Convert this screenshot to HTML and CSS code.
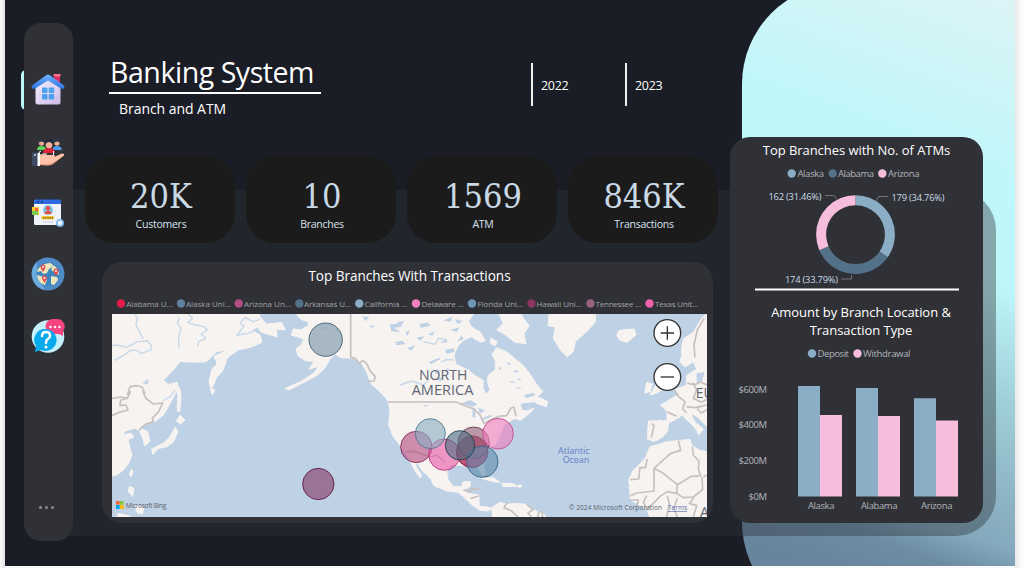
FILE: index.html
```html
<!DOCTYPE html>
<html lang="en">
<head>
<meta charset="utf-8">
<title>Banking System</title>
<link rel="stylesheet" href="styles.css">
</head>
<body>
<div class="dashboard">
  <div class="accent"></div>
  <div class="layer"></div>

  <nav class="sidebar">
    <span class="active-mark"></span>
    <svg class="icon" viewBox="0 0 34 34">
      <defs>
        <linearGradient id="roof" x1="0" y1="0" x2="0" y2="1"><stop offset="0" stop-color="#72b5ff"/><stop offset="1" stop-color="#2c72df"/></linearGradient>
        <linearGradient id="wall" x1="0" y1="0" x2="1" y2="1"><stop offset="0" stop-color="#f3f1ff"/><stop offset="1" stop-color="#cdb9e6"/></linearGradient>
      </defs>
      <path fill="#d92f62" d="M23 2h6v10l-6-4z"/><path fill="#ff6f8c" d="M22.500 1h7v2.500h-7z"/>
      <path fill="url(#wall)" d="M4.500 14 17 5l12.500 9v15.500a2 2 0 0 1-2 2h-21a2 2 0 0 1-2-2z"/>
      <path fill="url(#roof)" d="M15.500 2q1.500-1 3 0L33 12.500q1 1 0 2.500-1 1.500-3 .5L17 7.500 4 15.500q-2 1-3-.5-1-1.500 0-2.500z"/>
      <g fill="#4ba2ee"><rect x="11" y="14.500" width="5.500" height="5.500" rx="1"/><rect x="17.700" y="14.500" width="5.500" height="5.500" rx="1"/><rect x="11" y="21" width="5.500" height="5.500" rx="1"/><rect x="17.700" y="21" width="5.500" height="5.500" rx="1"/></g>
    </svg>
    <svg class="icon" viewBox="0 0 34 34">
      <path fill="#5bd65b" d="M6 15q0-4 4.500-4t4.500 4z"/><circle cx="10.500" cy="8" r="2.700" fill="#efac91"/><path fill="#29364a" d="M7.500 8q0-4 3-4t3 4q-3-3-6 0z"/>
      <path fill="#4a9cf0" d="M21.500 15q0-4 4.500-4t4.800 4z"/><circle cx="26" cy="8" r="2.700" fill="#efac91"/><path fill="#29364a" d="M23 8q0-4 3-4t3 4q-3-3-6 0z"/>
      <path fill="#e02436" d="M12 18q0-5 6-5t6 5z"/><circle cx="18" cy="9.800" r="3.500" fill="#f2b49a"/><path fill="#22293a" d="M13.800 10q-.3-5.500 4.200-5.500T22 10q-1.500-3-4-3t-4.200 3z"/>
      <path fill="none" stroke="#fff" stroke-width="1" stroke-dasharray="4 2" d="M8 19q0-3 2-3M12 19h5M22.500 16v4"/>
      <path fill="#ffc1a7" d="M8 20q4-2 8 0h7q2 1 0 2l8-3.500q3 0 2 2L22 29q-3 2-6 1H8z"/><path fill="#ed997f" d="m8 29 8 .5 5-1.500 10-6-9.500 7q-3 1.500-6 1.500L8 30z"/>
      <path fill="#fff" d="M6 18h3v13H6z"/><path fill="#3c4b63" d="M1 17.500h5.500V31H1z"/><circle cx="4" cy="20" r="1" fill="#dce3ef"/>
    </svg>
    <svg class="icon" viewBox="0 0 34 34">
      <rect x="3" y="3" width="27" height="25" rx="1.500" fill="#f0f3fa"/><path fill="#2f69df" d="M3 4q0-1.500 1.500-1.500h24Q30 2.500 30 4v3H3z"/><path stroke="#172d70" stroke-width="1.200" d="M8 .5v2M20 .5v2M24 .5v2M6 4.800h2M10 4.800h2"/>
      <circle cx="17" cy="13" r="5" fill="#7acced"/><circle cx="17" cy="11.300" r="2.300" fill="#ed4b49"/><path fill="#ed4b49" d="M13.500 17q0-3.200 3.500-3.200t3.500 3.200z"/>
      <rect x="10.500" y="19" width="12.500" height="3.600" rx="1" fill="#ffc730"/><path stroke="#5c502d" stroke-width="1.200" stroke-dasharray="1.300 .9" d="M12 20.800h10"/>
      <path stroke="#cbd2df" d="M12 25h10"/><path fill="#fec831" d="M1 10h7v8H1z"/><path fill="#77cf4b" d="M1 14h6v4H1z"/><path fill="#fa643f" d="M4 11h3v3H4z"/>
      <circle cx="29" cy="26" r="4" fill="#79b7ed"/><circle cx="29" cy="26" r="2.400" fill="#e7f6ff"/>
    </svg>
    <svg class="icon" viewBox="0 0 34 34">
      <circle cx="17" cy="17" r="16.500" fill="#4f8bc7"/><path fill="#6baadd" d="M6 5a16.500 16.500 0 0 0 8 28q-9-13-8-28z"/><circle cx="17" cy="17" r="11.500" fill="#3a84c0"/>
      <path fill="#ece7ba" d="M7 12q5-6 12-6 4 1 2 4l-3 2-2 4-4 1-2-3-4 1zM22 8q6 3 6 10l-3-2-5-3zM6 18l7 2 3 3-2 5q-7-2-8-10zM20 19l6 1 1 3-4 5-3-1z"/>
      <g fill="#e84e4b"><path d="M12 15q-2.500-3.500-2.500-5a2.500 2.500 0 0 1 5 0q0 1.500-2.500 5zM25 19q-2.500-3.500-2.500-5a2.500 2.500 0 0 1 5 0q0 1.500-2.500 5zM13.500 26Q11 22.500 11 21a2.500 2.500 0 0 1 5 0q0 1.500-2.500 5z"/></g>
      <g fill="#fff"><circle cx="12" cy="10" r="1"/><circle cx="25" cy="14" r="1"/><circle cx="13.500" cy="21" r="1"/></g>
    </svg>
    <svg class="icon" viewBox="0 0 34 34">
      <circle cx="17" cy="17.500" r="16.300" fill="#c4f0fb"/>
      <path fill="#f84582" d="M22 0h4a7.700 7.700 0 0 1 6 12.500V17l-4-2h-6A7.500 7.500 0 0 1 22 0z"/><g fill="#fff"><circle cx="19.500" cy="8" r="1.200"/><circle cx="24" cy="8" r="1.200"/><circle cx="28.500" cy="8" r="1.200"/></g>
      <path fill="#09a9ec" d="M15 10a11 11 0 1 1-5 21l-6 2 1-6A11 11 0 0 1 15 10z"/>
      <path fill="none" stroke="#fff" stroke-width="2.500" stroke-linecap="round" d="M11 17q0-4 4-4t4 4q0 2-2.500 3.300Q15 21.200 15 24"/><circle cx="15" cy="28" r="1.500" fill="#fff"/>
    </svg>
    <span class="more"><i></i><i></i><i></i></span>
  </nav>

  <main class="main">
    <header class="header">
      <div class="heading">
        <h1 class="title">Banking System</h1>
        <p class="subtitle">Branch and ATM</p>
      </div>
      <div class="years"><span class="year">2022</span><span class="year">2023</span></div>
    </header>

    <section class="stats">
      <div class="stat"><b>20K</b><span>Customers</span></div>
      <div class="stat"><b>10</b><span>Branches</span></div>
      <div class="stat"><b>1569</b><span>ATM</span></div>
      <div class="stat"><b>846K</b><span>Transactions</span></div>
    </section>

    <section class="map-card">
      <h2 class="card-title map-title">Top Branches With Transactions</h2>
      <svg class="map-legend" viewBox="112 297 595 14">
        <g>
          <circle cx="121" cy="303.500" r="4.200" fill="#e31b48"/><circle cx="181" cy="303.500" r="4.200" fill="#5e819d"/><circle cx="238.700" cy="303.500" r="4.200" fill="#b34e83"/><circle cx="299.300" cy="303.500" r="4.200" fill="#53728a"/><circle cx="359.300" cy="303.500" r="4.200" fill="#8badc5"/><circle cx="416" cy="303.500" r="4.200" fill="#f282bb"/><circle cx="472" cy="303.500" r="4.200" fill="#6e97b6"/><circle cx="531.500" cy="303.500" r="4.200" fill="#8b355f"/><circle cx="590.500" cy="303.500" r="4.200" fill="#98637f"/><circle cx="649.500" cy="303.500" r="4.200" fill="#ef62a9"/>
        </g>
        <g class="legend-text">
          <text x="126.300" y="307" textLength="46.500">Alabama U...</text><text x="186" y="307" textLength="45">Alaska Uni...</text><text x="244" y="307" textLength="47">Arizona Un...</text><text x="304" y="307" textLength="47">Arkansas U...</text><text x="364.500" y="307" textLength="43">California ...</text><text x="421.500" y="307" textLength="42">Delaware ...</text><text x="477.500" y="307" textLength="45.500">Florida Uni...</text><text x="536.500" y="307" textLength="45.500">Hawaii Uni...</text><text x="595.500" y="307" textLength="45.500">Tennessee ...</text><text x="655" y="307" textLength="43">Texas Unit...</text>
        </g>
      </svg>
      <svg class="map" viewBox="36 177 1785 609">
        <defs>
          <filter id="coast" x="-5%" y="-5%" width="110%" height="110%"><feTurbulence type="fractalNoise" baseFrequency=".14" numOctaves="3" seed="4"/><feDisplacementMap in="SourceGraphic" scale="5" xChannelSelector="R" yChannelSelector="G"/></filter>
        </defs>
        <rect x="36" y="177" width="1785" height="609" fill="#bed1e5"/>
        <g filter="url(#coast)">
          <g class="land">
            <!-- Asia, Japan and the western Pacific islands -->
            <path d="M0 140H465L480 185 500 208 545 202 556 225 528 222 532 246 512 240 485 232 470 217 455 226 480 240 486 262 455 276 415 285 392 300 380 312 375 330 366 350 350 366 343 385 333 405 327 380 335 345 350 328 348 315 342 304 386 284 350 290 335 305 318 320 290 322 240 320 215 350 190 376 205 388 232 382 235 402 225 418 205 455 190 480 165 500 150 502 132 510 124 520 143 530 150 558 134 573 130 555 118 527 104 520 76 528 70 540 92 534 102 545 84 556 90 580 96 600 86 625 70 645 50 660 0 672z"/>
            <path d="M232 392 240 402 243 430 239 470 232 468 234 430zM240 480 255 495 241 507 229 498zM226 516 233 530 221 560 201 575 177 580 163 590 159 580 190 565 206 550 216 534zM155 580 165 593 158 598zM95 643 99 650 93 665 88 656zM88 694 102 700 98 724 85 710zM108 750 130 758 128 777 109 770zM55 775 90 783 88 800H45zM330 402 345 404 337 418z"/>
            <!-- North America, from Alaska down to Panama -->
            <path d="M560 140 590 178 602 193 624 200 626 210 604 225 580 222 574 240 612 252 605 268 588 282 594 302 616 317 642 319 628 342 657 334 642 354 602 380 556 400 566 405 620 378 652 360 674 340 690 312 706 298 722 308 760 310 784 325 800 350 812 385 824 396 845 415 865 440 870 470 866 510 880 546 903 575 920 600 932 622 947 650 960 668 965 662 950 638 945 626 952 625 970 650 994 674 1000 690 1040 708 1075 712 1095 730 1116 750 1140 766 1164 768 1176 760 1161 756 1138 754 1136 720 1106 715 1091 704 1110 695 1112 680 1090 680 1084 695 1060 694 1044 674 1040 648 1052 630 1080 630 1105 636 1126 630 1140 646 1148 664 1156 658 1150 622 1160 594 1186 568 1202 534 1212 510 1244 490 1262 496 1294 470 1302 460 1280 468 1266 465 1260 445 1302 440 1320 446 1308 428 1328 410 1308 385 1285 350 1268 330 1242 309 1220 290 1190 278 1176 298 1186 318 1186 345 1165 360 1162 380 1170 405 1158 418 1149 400 1150 376 1122 360 1105 345 1068 328 1062 300 1074 272 1090 256 1116 245 1136 232 1115 215 1105 200 1145 140z"/>
            <path d="M1180 140H1245L1270 190 1288 212 1272 235 1278 266 1245 262 1214 238 1190 225 1210 205zM1172 250 1192 260 1186 272 1172 266zM1310 425 1324 430 1343 440 1340 455 1310 445zM1110 218 1140 230 1156 256 1144 262 1120 250z"/>
            <!-- Greenland, Iceland and the Caribbean -->
            <path d="M1350 140 1344 212 1366 216 1360 250 1382 286 1402 306 1420 290 1426 260 1460 230 1485 202 1490 140zM1550 242 1557 226 1602 222 1608 240 1581 262 1560 256zM1145 670 1180 668 1200 682 1180 680zM1205 685 1240 686 1252 694 1210 695zM1254 690H1264V696H1254z"/>
            <!-- South America -->
            <path d="M1175 758 1200 742 1222 748 1246 745 1280 748 1302 765 1335 780 1340 800H1180z"/>
            <!-- Europe -->
            <path d="M1860 140 1805 190 1780 232 1750 252 1745 278 1745 302 1739 322 1756 336 1780 320 1790 342 1760 362 1760 390 1722 405 1740 418 1726 424 1682 450 1700 468 1702 496 1645 498 1642 552 1665 560 1688 545 1702 530 1706 504 1732 490 1747 480 1766 500 1786 520 1796 540 1810 522 1784 500 1772 474 1795 488 1821 515 1860 520z"/>
            <path d="M1678 350 1690 340 1705 375 1695 400 1668 415 1650 420 1665 395 1675 375zM1640 382 1657 387 1650 410 1634 414z"/>
            <!-- Africa -->
            <path d="M1670 570 1702 560 1770 553 1776 572 1796 584 1860 600V800H1655L1640 762 1592 735 1589 705 1586 674 1600 646 1636 610 1650 575z"/>
          </g>
          <g class="water">
            <path d="M1270 420 1300 414 1308 420 1280 430zM1080 447 1110 435 1132 448 1120 455zM1118 462 1126 458 1126 488 1117 486zM1134 458 1155 466 1140 476zM1142 492 1170 480 1178 482 1150 496zM970 450h18l-15 5zM1035 285l25-5 5 10-25 6zM1020 262l22-9-2 10zM988 320l30-12 2 5-27 15zM1002 349l22-5-16 14zM1012 372l20-8-12 16zM958 208l25-6 8 10-28 6zM985 238l20-10-8 14zM870 210l30-7 6 12-24 3 20 14-28-3zM885 262l22-5 10 10-28 4zM892 202l22-5-10 13zM915 232l14-4-6 15zM921 280l24-9-11 16zM950 248l24-4-14 14zM1030 196l29-11-9 15zM1064 192l24 6-15 10zM1050 225l29-8-9 14zM1220 320l14 8-9 2zM1196 336l10 4-8 5zM1241 345l16 3-10 6zM1255 370l10 3-13 5zM1230 378l17 3-11 4zM1248 398l18-2-12 7zM1042 340l8 4-10 3zM788 184l20 3-12 12zM811 210l12 4-10 5zM705 221l15 2-11 5zM672 218l10 2-9 5zM125 385l25-7-8 10zM130 380l14-8-2 8zM1790 355l24-3-8 26-16 7zM1788 454l15 3-10 6z"/>
            <path d="M1765 180 1748 210 1730 220 1760 218 1792 180zM1110 278 1133 268 1120 284zM1070 260 1085 242 1091 252z"/>
          </g>
        </g>
        <g class="rivers"><path d="M36 272 52 270 80 277 112 260 142 258 153 270 153 285 125 295 107 285 90 287 70 302 45 316M105 178 112 190 108 210 118 230 130 252M238 188 232 205 244 220 236 245 237 280M265 178 278 190 265 202 285 210 312 215 322 225 304 238 318 250 296 260 292 275M480 193 460 200 435 188 420 205 432 213 412 240 445 235 475 220M1040 255 1015 250 1005 268 970 260M1025 320 1040 314 1060 315M900 390 935 378 970 390 985 376M225 405 212 424 190 437"/></g>
        <g class="borders"><path d="M752 177V307L766 310 778 326 788 316 800 326 812 350 826 365 822 378 802 380M862 441H1068L1096 453 1122 462 1140 480 1152 505 1178 492 1196 484 1220 482 1232 460 1242 456 1248 484M915 590H946L968 598 992 606 1010 600 1034 622"/><path d="M82 420 90 395 108 392 126 396 135 416M36 430 62 426 82 430 92 408M128 408 138 430 160 447 188 444 176 470 157 490 160 500 136 508 116 526M36 482 58 472 84 465 78 450 60 452 62 436 80 430"/><path d="M1090 705 1108 710 1118 701 1140 702M1112 730 1136 723M1221 743 1212 758 1235 768 1254 786M1280 748 1300 764 1284 774 1294 786M1318 768 1313 786M1326 770 1328 786"/><path d="M1785 307 1782 270 1792 225 1812 190M1762 384 1782 390 1802 381 1821 390M1724 405 1735 424 1755 440 1748 462 1760 474M1778 382 1790 405 1780 430 1804 442 1821 433M1655 506 1662 512 1654 548M1700 470 1730 484M1760 455 1785 458 1821 450M1792 462 1804 474 1821 464"/><path d="M1735 556 1742 586 1712 595 1662 640 1690 655 1732 689 1774 664 1802 662 1795 642 1797 618 1780 600 1777 575M1590 674 1616 672 1620 638 1636 638 1642 612M1662 640 1662 708 1610 714 1592 722M1732 689 1730 715 1702 710 1680 724 1665 740 1646 758M1590 735H1615L1612 752M1640 722 1630 742 1642 765M1702 724 1708 745 1700 786M1732 730 1722 760 1732 786M1730 715 1750 728 1780 726 1808 704 1806 666M1782 728 1768 745 1790 752 1780 786M1810 665 1821 660"/></g>

        <g class="bubbles">
          <circle cx="677" cy="254" r="50" fill="#7893a5" stroke="#36576e"/>
          <circle cx="655" cy="687" r="47" fill="#833a65" stroke="#5a183c"/>
          <circle cx="949" cy="576" r="47" fill="#b44c83" stroke="#77234e"/>
          <circle cx="1033" cy="599" r="47" fill="#e95aa6" stroke="#b72f76"/>
          <circle cx="1116" cy="591" r="47" fill="#e11f45" stroke="#911c40"/>
          <circle cx="1117" cy="589" r="47" fill="#b14272" stroke="#8f3966"/>
          <circle cx="1121" cy="563" r="47" fill="#966177" stroke="#633348"/>
          <circle cx="1147" cy="620" r="47" fill="#5f8bac" stroke="#34627f"/>
          <circle cx="1080" cy="571" r="44" fill="#4e7083" stroke="#193c50"/>
          <circle cx="991" cy="536" r="45" fill="#8badc0" stroke="#477590"/>
          <circle cx="1194" cy="536" r="46" fill="#ef80bd" stroke="#c1468c"/>
        </g>
        <g class="region"><text x="957" y="375" textLength="145" lengthAdjust="spacingAndGlyphs">NORTH</text><text x="935" y="421" textLength="185" lengthAdjust="spacingAndGlyphs">AMERICA</text><text x="1787" y="429">EU</text><text x="1800" y="787">A</text></g>
        <g class="ocean"><text x="1374" y="596" textLength="95">Atlantic</text><text x="1388" y="624" textLength="80">Ocean</text></g>
        <g stroke="#333"><circle cx="1702" cy="234" r="40" fill="#fff" stroke-width="4"/><path stroke-width="4" d="M1682 234h40M1702 214v40"/><circle cx="1702" cy="366" r="40" fill="#fff" stroke-width="4"/><path stroke-width="4" d="M1682 366h40"/></g>
        <path fill="#f46535" d="M48 738h11v11H48z"/><path fill="#8bc43f" d="M60 738h11v11H60z"/><path fill="#00a4ef" d="M48 750h11v12H48z"/><path fill="#ffba08" d="M60 750h11v12H60z"/>
        <g class="credits"><text x="77" y="758" textLength="122">Microsoft Bing</text><text x="1407" y="765" textLength="279">© 2024 Microsoft Corporation</text><text class="terms" x="1704" y="765" textLength="57">Terms</text></g>
      </svg>
    </section>
  </main>

  <aside class="panel">
    <h2 class="card-title">Top Branches with No. of ATMs</h2>
    <svg class="donut" viewBox="730 160 253 132">
      <circle cx="791.700" cy="173.500" r="4.200" fill="#8badc5"/><circle cx="832.700" cy="173.500" r="4.200" fill="#53728a"/><circle cx="882.300" cy="173.500" r="4.200" fill="#f6bedc"/>
      <g class="chart-text"><text x="797.500" y="177" textLength="26.500">Alaska</text><text x="838" y="177" textLength="36">Alabama</text><text x="888" y="177" textLength="31.500">Arizona</text></g>
      <g fill="none" stroke-width="10">
        <circle cx="855.500" cy="234.600" r="34.400" pathLength="100" stroke="#8badc5" stroke-dasharray="34.760 100" transform="rotate(-90 855.500 234.600)"/>
        <circle cx="855.500" cy="234.600" r="34.400" pathLength="100" stroke="#53728a" stroke-dasharray="33.780 100" stroke-dashoffset="-34.760" transform="rotate(-90 855.500 234.600)"/>
        <circle cx="855.500" cy="234.600" r="34.400" pathLength="100" stroke="#f6bedc" stroke-dasharray="31.460 100" stroke-dashoffset="-68.540" transform="rotate(-90 855.500 234.600)"/>
      </g>
      <path fill="none" stroke="#74757a" d="M825 195.500h9l3 4M876 201l2.500-4.500H888M841 279h10.500v-4"/>
      <g class="value-text"><text x="768.500" y="200" textLength="53">162 (31.46%)</text><text x="891.500" y="201" textLength="53">179 (34.76%)</text><text x="785" y="283" textLength="53">174 (33.79%)</text></g>
      <path stroke="#fff" stroke-width="2" d="M755 289.500h204"/>
    </svg>
    <h2 class="card-title amount">Amount by Branch Location &amp;<br>Transaction Type</h2>
    <svg class="bars" viewBox="730 344 253 179">
      <circle cx="812" cy="353.500" r="4.200" fill="#8badc5"/><circle cx="857.500" cy="353.500" r="4.200" fill="#f6bedc"/>
      <g class="chart-text"><text x="817.500" y="357" textLength="31.500">Deposit</text><text x="863" y="357" textLength="47.500">Withdrawal</text>
      <text x="738.500" y="393" textLength="28.500">$600M</text><text x="738.500" y="428" textLength="28.500">$400M</text><text x="738.500" y="464" textLength="28.500">$200M</text><text x="748.500" y="500" textLength="18.500">$0M</text>
      <text x="808" y="509" textLength="26.500">Alaska</text><text x="861" y="509" textLength="36.500">Alabama</text><text x="921" y="509" textLength="31.500">Arizona</text></g>
      <path fill="#8badc5" d="M798 386h22v110.500h-22zM856 388h22v108.500h-22zM914 398.300h22v98.200h-22z"/>
      <path fill="#f6bedc" d="M820 415h22v81.500h-22zM878 416h22v80.500h-22zM936 420.500h22v76h-22z"/>
    </svg>
  </aside>
</div>
</body>
</html>
```

FILE: styles.css
```css
* { box-sizing: border-box; }
body { margin: 0; width: 1023px; height: 568px; overflow: hidden; background: linear-gradient(90deg, #fafafa, #e4e4e4 5px, #fafafa 5px, #fafafa 1014px, #e9e9e9 1015px, #fbfbfb 1021px); font-family: "Open Sans", "Noto Sans", sans-serif; color: #fff; }
h1, h2, p { margin: 0; font-weight: 400; }
svg { display: block; }

.dashboard { position: relative; isolation: isolate; display: flex; align-items: flex-start; width: 1010px; height: 566px; margin-left: 5px; padding-left: 19px; overflow: hidden; background: #1a1d25; }
.accent { position: absolute; z-index: -2; left: 737px; top: -16px; width: 273px; height: 638px; border-radius: 100px 0 0 100px; background: linear-gradient(200deg, #dff4f7 0%, #cdf5f7 15%, #c0f7fa 27%, #bdf5f8 42%, #9fd0d8 57%, #8db4c4 70%, #84a9bd 77%, #6d8da5 82%, #68859f 88%); }
.layer { position: absolute; z-index: -1; left: 20px; top: 190px; width: 971px; height: 346px; border-radius: 40px; background: rgba(46, 49, 55, .4); }

.sidebar { position: relative; flex: none; display: grid; grid-template-rows: 62px 62px 62px 58px 66px 1fr; justify-items: center; align-items: center; width: 49px; height: 518px; margin-top: 23px; padding: 36px 1px 0 0; border-radius: 17px; background: #303136; }
.active-mark { position: absolute; z-index: -1; left: -3px; top: 47px; width: 12px; height: 40px; border-radius: 5px; background: #b9f6f7; }
.icon { width: 34px; height: 34px; }
.more { display: flex; gap: 3px; align-self: end; margin: 0 3px 32px 0; }
.more i { width: 3px; height: 3px; border-radius: 50%; background: #8b8c90; }

.main { flex: none; width: 633px; margin-left: 12px; }
.header { display: flex; height: 156px; }
.heading { width: 446px; padding: 52px 0 0 24px; }
.title { width: 212px; height: 42px; padding-left: 1px; border-bottom: 2px solid #fff; font-size: 28.500px; line-height: 40px; white-space: nowrap; letter-spacing: -.45px; }
.subtitle { padding-left: 10px; font-size: 14px; line-height: 30px; letter-spacing: -.05px; }
.years { display: flex; gap: 41px; padding-top: 63px; }
.year { width: 53px; height: 43px; padding-left: 8px; border-left: 2px solid #eee; font-size: 12.500px; line-height: 45px; letter-spacing: -.3px; }

.stats { display: grid; grid-template-columns: repeat(4, 150px); gap: 11px; }
.stat { height: 87px; padding: 19px 0 0 2px; border-radius: 29px; background: #1b1b1b; text-align: center; }
.stat b { display: block; font: 400 34px/42px "DejaVu Serif Condensed", "Liberation Serif", serif; color: #c9d9e6; }
.stat span { display: block; font-size: 10.500px; line-height: 14px; color: #d8e4f0; letter-spacing: -.25px; }

.map-card { width: 611px; height: 261px; margin: 19px 0 0 17px; padding: 3px 6px 0 10px; border-radius: 20px; background: #303136; }
.card-title { font-size: 13px; line-height: 21px; text-align: center; white-space: nowrap; letter-spacing: -.05px; }
.map-title { font-size: 13.600px; }
.map-legend { width: 595px; height: 14px; margin-top: 11px; }
.legend-text { font-size: 8px; fill: #a0a1a5; }
.map { width: 595px; height: 203px; margin-top: 3px; }
.land { fill: #f7f3f1; stroke: #f7f3f1; stroke-width: 3; stroke-linejoin: round; }
.water { fill: #bed1e5; }
.rivers { fill: none; stroke: #c5d7e8; stroke-width: 4; }
.borders { fill: none; stroke: #c6c1c0; stroke-width: 5; stroke-linejoin: round; }
.bubbles { fill-opacity: .62; stroke-opacity: .85; stroke-width: 3; }
.region { font-size: 42px; fill: #606574; }
.ocean { font-size: 27px; fill: #647fc7; }
.credits { font-size: 19.500px; fill: #5c626b; }
.terms { fill: #596bad; text-decoration: underline; }

.panel { flex: none; width: 253px; height: 386px; margin: 137px 0 0 12px; padding-top: 3px; border-radius: 20px; background: #303136; }
.donut { width: 253px; height: 132px; margin-top: -1px; }
.amount { height: 52px; padding: 11px 0 0 9px; line-height: 18px; }
.bars { width: 253px; height: 179px; }
.chart-text { font-size: 9.500px; fill: #b0b4bc; }
.value-text { font-size: 9.300px; fill: #cbdcea; }
```
